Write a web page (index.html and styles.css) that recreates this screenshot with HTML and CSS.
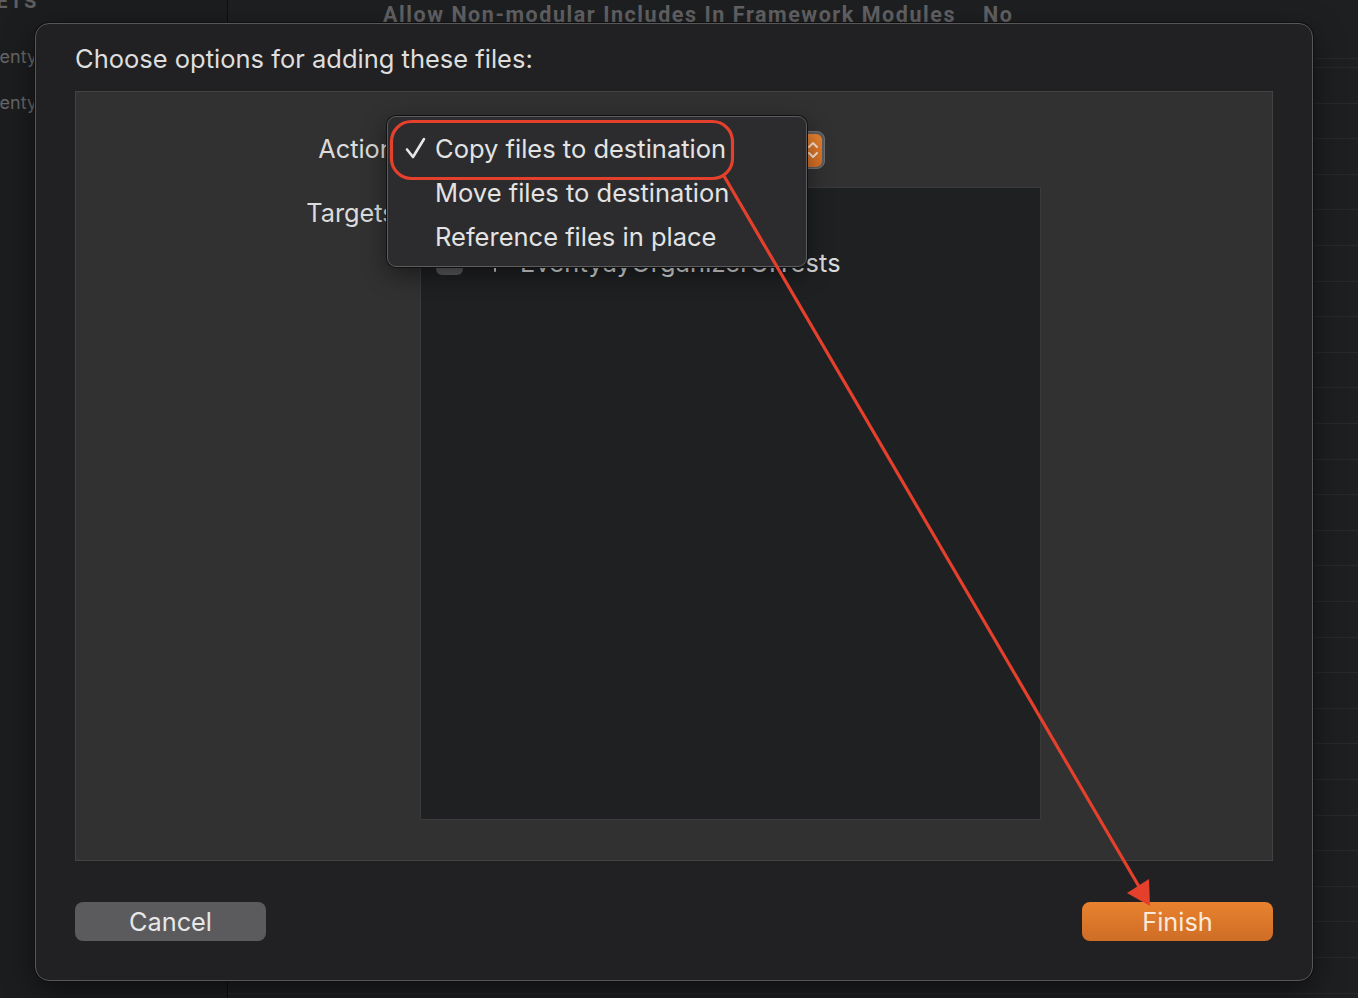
FILE: index.html
```html
<!DOCTYPE html>
<html>
<head>
<meta charset="utf-8">
<link rel="stylesheet" href="styles.css">
</head>
<body>
<div class="app">
  <aside class="sidebar">
    <div class="side-head"><span>TARGETS</span></div>
    <div class="side-item">Eventyay</div>
    <div class="side-item">Eventyay</div>
  </aside>
  <main class="main">
    <div class="setting-row">
      <span class="setting-name">Allow Non-modular Includes In Framework Modules</span>
      <span class="setting-value">No</span>
    </div>
    <div class="rows"></div>
  </main>
</div>

<div class="dialog">
  <div class="dialog-title">Choose options for adding these files:</div>
  <div class="options">
    <div class="opt-label label-action">Action:</div>
    <div class="popup">
      <span class="popup-text">Copy files to destination</span>
      <span class="popup-arrows">
        <svg width="12" height="22" viewBox="0 0 12 22"><path d="M2 8 L6 4 L10 8 M2 14 L6 18 L10 14" fill="none" stroke="#fbe4d4" stroke-width="2" stroke-linecap="round" stroke-linejoin="round"/></svg>
      </span>
    </div>
    <div class="opt-label label-targets">Targets:</div>
    <div class="targets">
      <div class="target-row">
        <span class="checkbox"></span>
        <span class="target-icon"><svg width="24" height="24" viewBox="0 0 24 24"><path d="M12 3 L5 21 M12 3 L19 21 M8 14 H16" fill="none" stroke="#cfcfcf" stroke-width="2" stroke-linecap="round"/></svg></span>
        <span class="target-name">EventyayOrganizer</span>
      </div>
      <div class="target-row">
        <span class="checkbox"></span>
        <span class="target-icon"><svg width="24" height="24" viewBox="0 0 24 24"><path d="M12 3 L12 21 M4 8 L8 12 L4 16" fill="none" stroke="#cfcfcf" stroke-width="2" stroke-linecap="round"/></svg></span>
        <span class="target-name">EventyayOrganizerUITests</span>
      </div>
    </div>

    <div class="menu">
      <div class="menu-item"><span class="check"><svg width="24" height="24" viewBox="0 0 24 24"><path d="M3 13.5 L9 21 L20 3" fill="none" stroke="#e6e6e6" stroke-width="2.6" stroke-linecap="round" stroke-linejoin="round"/></svg></span>Copy files to destination</div>
      <div class="menu-item">Move files to destination</div>
      <div class="menu-item">Reference files in place</div>
    </div>
  </div>
  <div class="buttons">
    <button class="btn btn-cancel">Cancel</button>
    <button class="btn btn-finish">Finish</button>
  </div>
</div>

<svg class="annotation" width="1358" height="998" viewBox="0 0 1358 998">
  <rect x="391.5" y="121.5" width="341" height="57" rx="20" ry="20" fill="none" stroke="#e5402c" stroke-width="3.2"/>
  <line x1="724" y1="176" x2="1141" y2="890" stroke="#e5402c" stroke-width="3.2"/>
  <polygon points="1150,906 1127,893 1149,879" fill="#e5402c"/>
</svg>
</body>
</html>
```

FILE: styles.css
```css
* { box-sizing: border-box; }
html, body {
  margin: 0;
  padding: 0;
  width: 1358px;
  height: 998px;
  overflow: hidden;
  background: #1d1e20;
  font-family: Inter, "Noto Sans", "Liberation Sans", sans-serif;
}

.app {
  display: flex;
  width: 1358px;
  height: 998px;
}

.sidebar {
  width: 228px;
  height: 100%;
  background: #1c1d1f;
  border-right: 1px solid #0f0f10;
  color: #6a6a6c;
  overflow: hidden;
}
.side-head {
  width: 38px;
  display: flex;
  justify-content: flex-end;
  white-space: nowrap;
  font-size: 19px;
  font-weight: 700;
  letter-spacing: 1.6px;
  line-height: 20px;
  margin-top: -8px;
  color: #5e5e60;
}
.side-item {
  font-size: 18px;
  line-height: 46px;
  margin-left: -21px;
  color: #666668;
  white-space: nowrap;
}
.side-head + .side-item { margin-top: 22px; }

.main {
  flex: 1;
  height: 100%;
  background: #1e1f21;
}
.setting-row {
  height: 28px;
  display: flex;
  gap: 27px;
  padding-left: 155px;
  align-items: center;
  color: #626264;
  font-weight: 700;
  font-size: 21.5px;
  font-family: "Roboto", "Liberation Sans", sans-serif;
  letter-spacing: 1.55px;
}
.rows {
  height: 970px;
  background: repeating-linear-gradient(to bottom, #28292b 0, #28292b 1px, transparent 1px, transparent 35.6px);
  background-position: 0 39px;
}

.dialog {
  position: absolute;
  left: 35px;
  top: 23px;
  width: 1278px;
  height: 958px;
  background: #212123;
  border: 1px solid #575759;
  border-radius: 14px;
  box-shadow: 0 0 0 1px #101011, 0 10px 30px rgba(0,0,0,0.5);
  padding: 20px 39px 39px;
  display: flex;
  flex-direction: column;
}
.dialog-title {
  font-size: 25.5px;
  line-height: 30px;
  color: #dedede;
  margin-bottom: 17px;
}

.options {
  position: relative;
  height: 770px;
  background: #313131;
  border: 1px solid #424242;
  display: grid;
  grid-template-columns: 326px 621px;
  grid-template-rows: 38px 633px;
  column-gap: 18px;
  row-gap: 18px;
  padding-top: 39px;
  align-content: start;
}
.opt-label {
  font-size: 25.3px;
  color: #dcdcdc;
  text-align: right;
}
.label-action { line-height: 36px; }
.label-targets { line-height: 52px; margin-right: -1px; }

.popup {
  width: 411px;
  height: 38px;
  margin-left: -6px;
  background: #5c5c5e;
  border-radius: 8px;
  border: 1px solid #707072;
  display: flex;
  align-items: center;
  justify-content: space-between;
  padding: 0 2px 0 14px;
  color: #e5e5e5;
  font-size: 24px;
}
.popup-arrows {
  width: 19px;
  height: 33px;
  background: linear-gradient(#e8822f, #d26e26);
  border-radius: 6px;
  display: flex;
  align-items: center;
  justify-content: center;
}

.targets {
  background: #1f2022;
  border: 1px solid #3a3a3c;
  padding-top: 8px;
}
.target-row {
  height: 44px;
  display: flex;
  align-items: center;
  padding-left: 15px;
  color: #dcdcdc;
  font-size: 25.3px;
}
.checkbox {
  width: 27px;
  height: 26px;
  border-radius: 6px;
  background: #5a5a5c;
  flex: none;
}
.target-icon {
  width: 24px;
  height: 24px;
  margin-left: 20px;
  flex: none;
  display: flex;
}
.target-name {
  margin-left: 13px;
  letter-spacing: 0.2px;
}

.menu {
  position: absolute;
  left: 311px;
  top: 24px;
  width: 420px;
  height: 151px;
  background: #2c2c2e;
  border: 1px solid #5c5c5e;
  border-radius: 9px;
  box-shadow: 0 0 0 1px #111, 0 8px 24px rgba(0,0,0,0.45);
  padding: 10px 0 8px;
}
.menu-item {
  height: 44px;
  line-height: 44px;
  font-size: 25.5px;
  color: #e3e3e3;
  padding-left: 47px;
  position: relative;
}
.check {
  position: absolute;
  left: 16px;
  top: 9px;
  width: 24px;
  height: 24px;
  display: flex;
}

.buttons {
  margin-top: 41px;
  display: flex;
  justify-content: space-between;
}
.btn {
  width: 191px;
  height: 39px;
  border: none;
  border-radius: 8px;
  font-family: Inter, "Noto Sans", "Liberation Sans", sans-serif;
  font-size: 25.3px;
  padding: 0;
  line-height: 37px;
}
.btn-cancel {
  background: #5b5b5d;
  color: #e8e8e8;
}
.btn-finish {
  background: linear-gradient(#e8822f, #cf6d26);
  color: #fbeadc;
}

.annotation {
  position: absolute;
  left: 0;
  top: 0;
  pointer-events: none;
}
```
